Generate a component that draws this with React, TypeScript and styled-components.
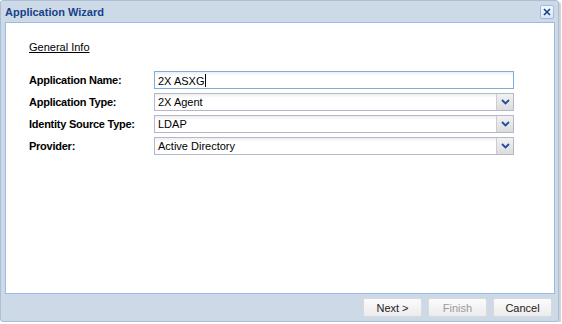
import React from "react";
import styled, { createGlobalStyle } from "styled-components";

const GlobalStyle = createGlobalStyle`
  html, body {
    margin: 0;
    padding: 0;
    background: #ffffff;
  }
  body {
    font-family: Tahoma, "DejaVu Sans", "Liberation Sans", sans-serif;
    font-size: 11px;
  }
`;

const Window = styled.div`
  width: 557px;
  height: 320px;
  border: 1px solid #a9bfd6;
  border-radius: 3px;
  background: #ced9e7;
  display: flex;
  flex-direction: column;
  box-shadow: 2px 2px 1px rgba(0, 0, 0, 0.18);
  font-family: "Liberation Sans", Arial, sans-serif;
  font-size: 11px;
`;

const TitleBar = styled.div`
  height: 21px;
  display: flex;
  align-items: center;
  justify-content: space-between;
  padding: 0 4px 0 4px;
`;

const Title = styled.span`
  color: #15428b;
  font-weight: bold;
  font-size: 11px;
`;

const CloseButton = styled.div`
  width: 12px;
  height: 12px;
  border: 1px solid #99bbe8;
  border-radius: 2px;
  background: linear-gradient(#f4f8fc, #dbe6f3);
  display: flex;
  align-items: center;
  justify-content: center;
  margin-top: 1px;
`;

const Body = styled.div`
  flex: 1;
  margin: 0 3px 0 4px;
  border: 1px solid #99bbe8;
  background: #ffffff;
  padding: 18px 0 0 23px;
  display: flex;
  flex-direction: column;
`;

const SectionLink = styled.span`
  color: #000;
  text-decoration: underline;
  margin-bottom: 18px;
  font-size: 11px;
`;

const Form = styled.div`
  display: grid;
  grid-template-columns: 125px 360px;
  row-gap: 4px;
  align-items: center;
`;

const Label = styled.label`
  font-weight: bold;
  color: #000;
  font-size: 11px;
  letter-spacing: -0.25px;
`;

const FieldBox = styled.div<{ $focused?: boolean }>`
  height: 16px;
  border: 1px solid ${(p) => (p.$focused ? "#7eadd9" : "#b5b8c8")};
  background: linear-gradient(#eeeeee 0, #ffffff 4px, #ffffff 100%);
  display: flex;
  align-items: center;
`;

const FieldText = styled.span`
  flex: 1;
  padding-left: 3px;
  color: #000;
  font-size: 11px;
  white-space: nowrap;
`;

const Caret = styled.span`
  display: inline-block;
  width: 1px;
  height: 13px;
  background: #000;
  vertical-align: -2px;
  margin-left: 1px;
`;

const Trigger = styled.div`
  width: 16px;
  height: 16px;
  border-left: 1px solid #c9ccd6;
  background: linear-gradient(#f2f2f2, #dcdcdc);
  display: flex;
  align-items: center;
  justify-content: center;
`;

const Footer = styled.div`
  height: 27px;
  display: flex;
  align-items: center;
  justify-content: flex-end;
  gap: 6px;
  padding-right: 6px;
`;

const Button = styled.button<{ $disabled?: boolean }>`
  width: 59px;
  height: 19px;
  border: 1px solid #d6dbe1;
  border-radius: 2px;
  background: linear-gradient(#fbfbfb, #ececec);
  color: ${(p) => (p.$disabled ? "#9a9a9a" : "#222")};
  font-family: "Liberation Sans", Arial, sans-serif;
  font-size: 11px;
  padding: 0;
`;

const Chevron = () => (
  <svg width="9" height="6" viewBox="0 0 9 6">
    <path d="M1 1 L4.5 4.5 L8 1" stroke="#1f4f9c" strokeWidth="1.8" fill="none" />
  </svg>
);

const CloseIcon = () => (
  <svg width="8" height="8" viewBox="0 0 8 8">
    <path d="M1 1 L7 7 M7 1 L1 7" stroke="#15428b" strokeWidth="1.6" />
  </svg>
);

interface FieldProps {
  label: string;
  value: string;
  combo?: boolean;
  focused?: boolean;
}

const Field: React.FC<FieldProps> = ({ label, value, combo, focused }) => (
  <>
    <Label>{label}</Label>
    <FieldBox $focused={focused}>
      <FieldText>
        {value}
        {focused && <Caret />}
      </FieldText>
      {combo && (
        <Trigger>
          <Chevron />
        </Trigger>
      )}
    </FieldBox>
  </>
);

const App: React.FC = () => {
  return (
    <>
      <GlobalStyle />
      <Window>
        <TitleBar>
          <Title>Application Wizard</Title>
          <CloseButton>
            <CloseIcon />
          </CloseButton>
        </TitleBar>
        <Body>
          <SectionLink>General Info</SectionLink>
          <Form>
            <Field label="Application Name:" value="2X ASXG" focused />
            <Field label="Application Type:" value="2X Agent" combo />
            <Field label="Identity Source Type:" value="LDAP" combo />
            <Field label="Provider:" value="Active Directory" combo />
          </Form>
        </Body>
        <Footer>
          <Button>Next &gt;</Button>
          <Button $disabled>Finish</Button>
          <Button>Cancel</Button>
        </Footer>
      </Window>
    </>
  );
};

export default App;
